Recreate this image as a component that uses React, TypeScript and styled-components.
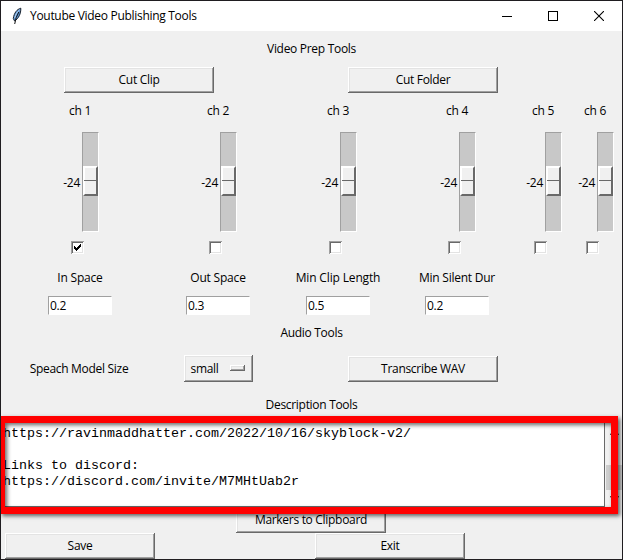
import React from "react";
import styled, { createGlobalStyle, css } from "styled-components";

const Global = createGlobalStyle`
  * { box-sizing: border-box; }
  body { margin: 0; background: #f0f0f0; overflow: hidden; }
`;

const raised = css`
  background: #f0f0f0;
  box-shadow: inset -1px -1px #696969, inset 1px 1px #ffffff,
    inset -2px -2px #a0a0a0, inset 2px 2px #e3e3e3;
`;

const Window = styled.div`
  width: 623px;
  height: 560px;
  border: 1px solid #1f1d20;
  background: #f0f0f0;
  display: flex;
  flex-direction: column;
  overflow: hidden;
  font: 12px/16px "Open Sans", "Noto Sans", sans-serif;
  color: #000;
`;

const TitleBar = styled.header`
  height: 30px;
  flex: none;
  background: #fff;
  display: flex;
  align-items: center;
  padding-left: 9px;
`;

const Title = styled.div`
  flex: 1;
  padding-left: 6px;
`;

const WindowControl = styled.div`
  width: 46px;
  height: 30px;
  display: flex;
  align-items: center;
  justify-content: center;
`;

const Text = styled.span<{ $track?: number }>`
  white-space: nowrap;
  letter-spacing: ${(p) => p.$track ?? -0.3}px;
`;

const Heading = styled.div<{ $top?: number; $height?: number }>`
  height: ${(p) => p.$height ?? 36}px;
  margin-top: ${(p) => p.$top ?? 0}px;
  flex: none;
  display: flex;
  align-items: center;
  justify-content: center;
`;

const ButtonRow = styled.div`
  display: grid;
  grid-template-columns: 274px 294px;
  padding-left: 1px;
  justify-items: center;
  flex: none;
`;

const Button = styled.button`
  ${raised}
  width: 150px;
  height: 26px;
  flex: none;
  border: 0;
  padding: 0 0 1px 0;
  font: inherit;
  color: inherit;
`;

const Columns = styled.div<{ $top?: number; $height: number }>`
  display: grid;
  grid-template-columns: 156px 120px 120px 118px 54px 50px;
  margin-top: ${(p) => p.$top ?? 0}px;
  height: ${(p) => p.$height}px;
  padding-left: 1px;
  flex: none;
  align-items: center;
  justify-items: center;
`;

const Scale = styled.div`
  display: flex;
  align-items: center;
  justify-content: flex-end;
  width: 38px;
  gap: 2px;
`;

const Trough = styled.div`
  width: 17px;
  height: 100px;
  flex: none;
  border: 1px solid;
  border-color: #a0a0a0 #fff #fff #a0a0a0;
  background: #c8c8c8;
  padding-top: 33px;
`;

const Thumb = styled.div`
  width: 15px;
  height: 30px;
  border: 2px solid;
  border-color: #fff #696969 #696969 #fff;
  background: #f0f0f0;
  padding-top: 12px;

  &::before {
    content: "";
    display: block;
    height: 1px;
    margin-left: -1px;
    background: #696969;
  }
`;

const ScaleValue = styled(Text)`
  padding-top: 1px;
`;

const Check = styled.div`
  width: 13px;
  height: 13px;
  margin-right: 5px;
  background: #fff;
  box-shadow: inset 1px 1px #a0a0a0, inset -1px -1px #fff,
    inset 2px 2px #696969, inset -2px -2px #e3e3e3;

  svg { display: block; }
`;

const Entry = styled.input`
  width: 64px;
  height: 19px;
  border: 1px solid;
  border-color: #a0a0a0 #fff #fff #a0a0a0;
  padding: 0 1px;
  background: #fff;
  font: inherit;
  letter-spacing: -0.3px;
  color: inherit;
  outline: 0;
`;

const AudioRow = styled.div`
  display: grid;
  grid-template-columns: 156px 120px 290px;
  margin-top: 4px;
  height: 27px;
  flex: none;
  padding-left: 1px;
  align-items: end;
  justify-items: center;
`;

const ModelLabel = styled(Text)`
  align-self: center;
  padding-right: 2px;
`;

const OptionMenu = styled.div`
  ${raised}
  width: 69px;
  height: 27px;
  display: flex;
  align-items: center;
  justify-content: space-between;
  padding: 0 8px 0 7px;
`;

const Indicator = styled.i`
  ${raised}
  width: 15px;
  height: 6px;
  margin-top: -2px;
`;

const Editor = styled.section`
  position: relative;
  display: flex;
  height: 85px;
  flex: none;
`;

const EditorText = styled.pre`
  margin: 0;
  width: 604px;
  padding: 4px 0 0 2px;
  background: #fff;
  border-right: 1px solid #696969;
  border-bottom: 1px solid #696969;
  font: 13.333px/16px "Liberation Mono", "Courier New", monospace;
`;

const Scrollbar = styled.div`
  width: 16px;
  margin-left: 1px;
  display: flex;
  flex-direction: column;
  align-items: center;
  justify-content: space-between;
  padding: 9px 0 7px;
  background: #f0f0f0;
`;

const ScrollThumb = styled.div`
  width: 16px;
  height: 25px;
  margin-top: 24px;
  background: #cdcdcd;
`;

const Highlight = styled.div`
  position: absolute;
  left: -1px;
  top: -6px;
  width: 618px;
  height: 98px;
  border: 7px solid #f00;
  border-left-width: 5px;
  box-shadow: 2px 2px 4px rgba(0, 0, 0, 0.6), inset 2px 2px 4px rgba(0, 0, 0, 0.6);
  pointer-events: none;
`;

const MarkerRow = styled.div`
  display: flex;
  padding-left: 235px;
  height: 26px;
  flex: none;
`;

const Footer = styled.footer`
  display: flex;
  gap: 160px;
  padding-left: 4px;
`;

const channels = [1, 2, 3, 4, 5, 6];
const settings = [
  { label: "In Space", value: "0.2", track: -0.2 },
  { label: "Out Space", value: "0.3", track: -0.2 },
  { label: "Min Clip Length", value: "0.5", track: -0.15 },
  { label: "Min Silent Dur", value: "0.2", track: -0.25 },
];
const description = `https://ravinmaddhatter.com/2022/10/16/skyblock-v2/

Links to discord:
https://discord.com/invite/M7MHtUab2r`;

const Feather = () => (
  <svg width="14" height="18" viewBox="0 0 14 18">
    <path d="M10.8 1.2C7 2.2 4 6 3.3 11.5L4.6 14C8.7 11.5 11 6.5 10.8 1.2Z" fill="#5c93d0" stroke="#17202b" strokeWidth="1" />
    <path d="M9.5 3C6.7 5 5.5 8 4.8 11" fill="none" stroke="#b9d5f2" strokeWidth="1" />
    <path d="M8.8 5Q5.7 10 4.7 17" fill="none" stroke="#111" strokeWidth="1" />
  </svg>
);

export default function App() {
  return (
    <>
      <Global />
      <Window>
        <TitleBar>
          <Feather />
          <Title><Text>Youtube Video Publishing Tools</Text></Title>
          <WindowControl>
            <svg width="10" height="10" shapeRendering="crispEdges"><path d="M0 5h10v1H0z" /></svg>
          </WindowControl>
          <WindowControl>
            <svg width="10" height="10" shapeRendering="crispEdges"><path d="M.5.5h9v9h-9z" fill="none" stroke="#000" /></svg>
          </WindowControl>
          <WindowControl>
            <svg width="10" height="10"><path d="M0 0L10 10M10 0L0 10" stroke="#000" strokeWidth="1.1" /></svg>
          </WindowControl>
        </TitleBar>

        <Heading><Text>Video Prep Tools</Text></Heading>
        <ButtonRow>
          <Button><Text>Cut Clip</Text></Button>
          <Button><Text>Cut Folder</Text></Button>
        </ButtonRow>

        <Columns $height={36}>
          {channels.map((c) => <Text key={c}>ch {c}</Text>)}
        </Columns>
        <Columns $top={3} $height={100}>
          {channels.map((c) => (
            <Scale key={c}>
              <ScaleValue>-24</ScaleValue>
              <Trough><Thumb /></Trough>
            </Scale>
          ))}
        </Columns>
        <Columns $top={9} $height={13}>
          {channels.map((c) => (
            <Check key={c}>
              {c === 1 && (
                <svg width="13" height="13" shapeRendering="crispEdges">
                  <path d="M3 5h1v3H3zM4 6h1v3H4zM5 7h1v3H5zM6 6h1v3H6zM7 5h1v3H7zM8 4h1v3H8zM9 3h1v3H9z" />
                </svg>
              )}
            </Check>
          ))}
        </Columns>

        <Columns $top={6} $height={36}>
          {settings.map((s) => <Text key={s.label} $track={s.track}>{s.label}</Text>)}
        </Columns>
        <Columns $height={19}>
          {settings.map((s) => <Entry key={s.label} defaultValue={s.value} aria-label={s.label} />)}
        </Columns>

        <Heading><Text>Audio Tools</Text></Heading>
        <AudioRow>
          <ModelLabel>Speach Model Size</ModelLabel>
          <OptionMenu><Text>small</Text><Indicator /></OptionMenu>
          <Button><Text>Transcribe WAV</Text></Button>
        </AudioRow>

        <Heading $top={6} $height={34}><Text>Description Tools</Text></Heading>
        <Editor>
          <EditorText>{description}</EditorText>
          <Scrollbar>
            <svg width="9" height="4"><path d="M0 4L4.5 .5L9 4" fill="none" stroke="#505050" strokeWidth="1.5" /></svg>
            <ScrollThumb />
            <svg width="9" height="4"><path d="M0 0L4.5 3.5L9 0" fill="none" stroke="#505050" strokeWidth="1.5" /></svg>
          </Scrollbar>
          <Highlight />
        </Editor>
        <MarkerRow><Button><Text>Markers to Clipboard</Text></Button></MarkerRow>
        <Footer>
          <Button><Text>Save</Text></Button>
          <Button><Text>Exit</Text></Button>
        </Footer>
      </Window>
    </>
  );
}
